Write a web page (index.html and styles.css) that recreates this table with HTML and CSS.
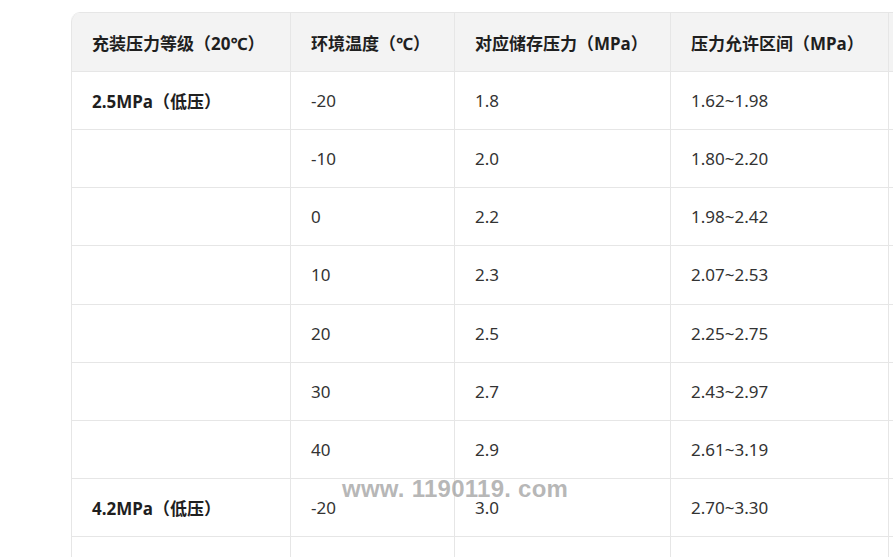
FILE: index.html
```html
<!DOCTYPE html>
<html lang="zh-CN">
<head>
<meta charset="utf-8">
<title>充装压力表</title>
<link rel="stylesheet" href="styles.css">
</head>
<body>
<div class="page">
  <div class="table-wrap">
    <table class="data">
      <thead>
        <tr>
          <th class="c1">充装压力等级（20℃）</th>
          <th class="c2">环境温度（℃）</th>
          <th class="c3">对应储存压力（MPa）</th>
          <th class="c4">压力允许区间（MPa）</th>
          <th class="c5"></th>
        </tr>
      </thead>
      <tbody>
        <tr><td class="strong">2.5MPa（低压）</td><td>-20</td><td>1.8</td><td>1.62~1.98</td><td></td></tr>
        <tr><td></td><td>-10</td><td>2.0</td><td>1.80~2.20</td><td></td></tr>
        <tr><td></td><td>0</td><td>2.2</td><td>1.98~2.42</td><td></td></tr>
        <tr><td></td><td>10</td><td>2.3</td><td>2.07~2.53</td><td></td></tr>
        <tr><td></td><td>20</td><td>2.5</td><td>2.25~2.75</td><td></td></tr>
        <tr><td></td><td>30</td><td>2.7</td><td>2.43~2.97</td><td></td></tr>
        <tr><td></td><td>40</td><td>2.9</td><td>2.61~3.19</td><td></td></tr>
        <tr><td class="strong">4.2MPa（低压）</td><td>-20</td><td>3.0</td><td>2.70~3.30</td><td></td></tr>
        <tr><td></td><td></td><td></td><td></td><td></td></tr>
      </tbody>
    </table>
  </div>
  <div class="watermark">www. 1190119. com</div>
</div>
</body>
</html>
```

FILE: styles.css
```css
html, body {
  margin: 0;
  padding: 0;
  background: #ffffff;
  overflow: hidden;
}

.page {
  position: relative;
  width: 893px;
  height: 557px;
  overflow: hidden;
  font-family: "Noto Sans", "Noto Sans CJK SC", sans-serif;
}

.table-wrap {
  padding: 12px 0 0 71px;
}

.data {
  border-collapse: separate;
  border-spacing: 0;
  table-layout: fixed;
  width: 1020px;
  border-top: 1px solid #e6e6e6;
  border-top-left-radius: 9px;
  overflow: hidden;
}

.data th,
.data td {
  box-sizing: border-box;
  height: 58.125px;
  padding: 0 10px 0 20px;
  border-left: 1px solid #e6e6e6;
  border-bottom: 1px solid #e6e6e6;
  text-align: left;
  vertical-align: middle;
  font-size: 17px;
  white-space: nowrap;
}

.data th {
  height: 59px;
  background: #f3f3f3;
  color: #1f1f1f;
  font-weight: 700;
}

.data thead th.c1 {
  border-top-left-radius: 9px;
}

.data td {
  color: #333333;
  font-weight: 400;
}

.data td.strong {
  color: #1f1f1f;
  font-weight: 700;
}

.c1 { width: 219px; }
.c2 { width: 164px; }
.c3 { width: 216px; }
.c4 { width: 218px; }
.c5 { width: 203px; }

.watermark {
  position: absolute;
  left: 342px;
  top: 477px;
  font-family: "Liberation Sans", Arial, sans-serif;
  font-weight: 700;
  font-size: 24px;
  line-height: 24px;
  letter-spacing: 0.25px;
  color: rgba(160, 160, 160, 0.75);
  white-space: pre;
}
```
